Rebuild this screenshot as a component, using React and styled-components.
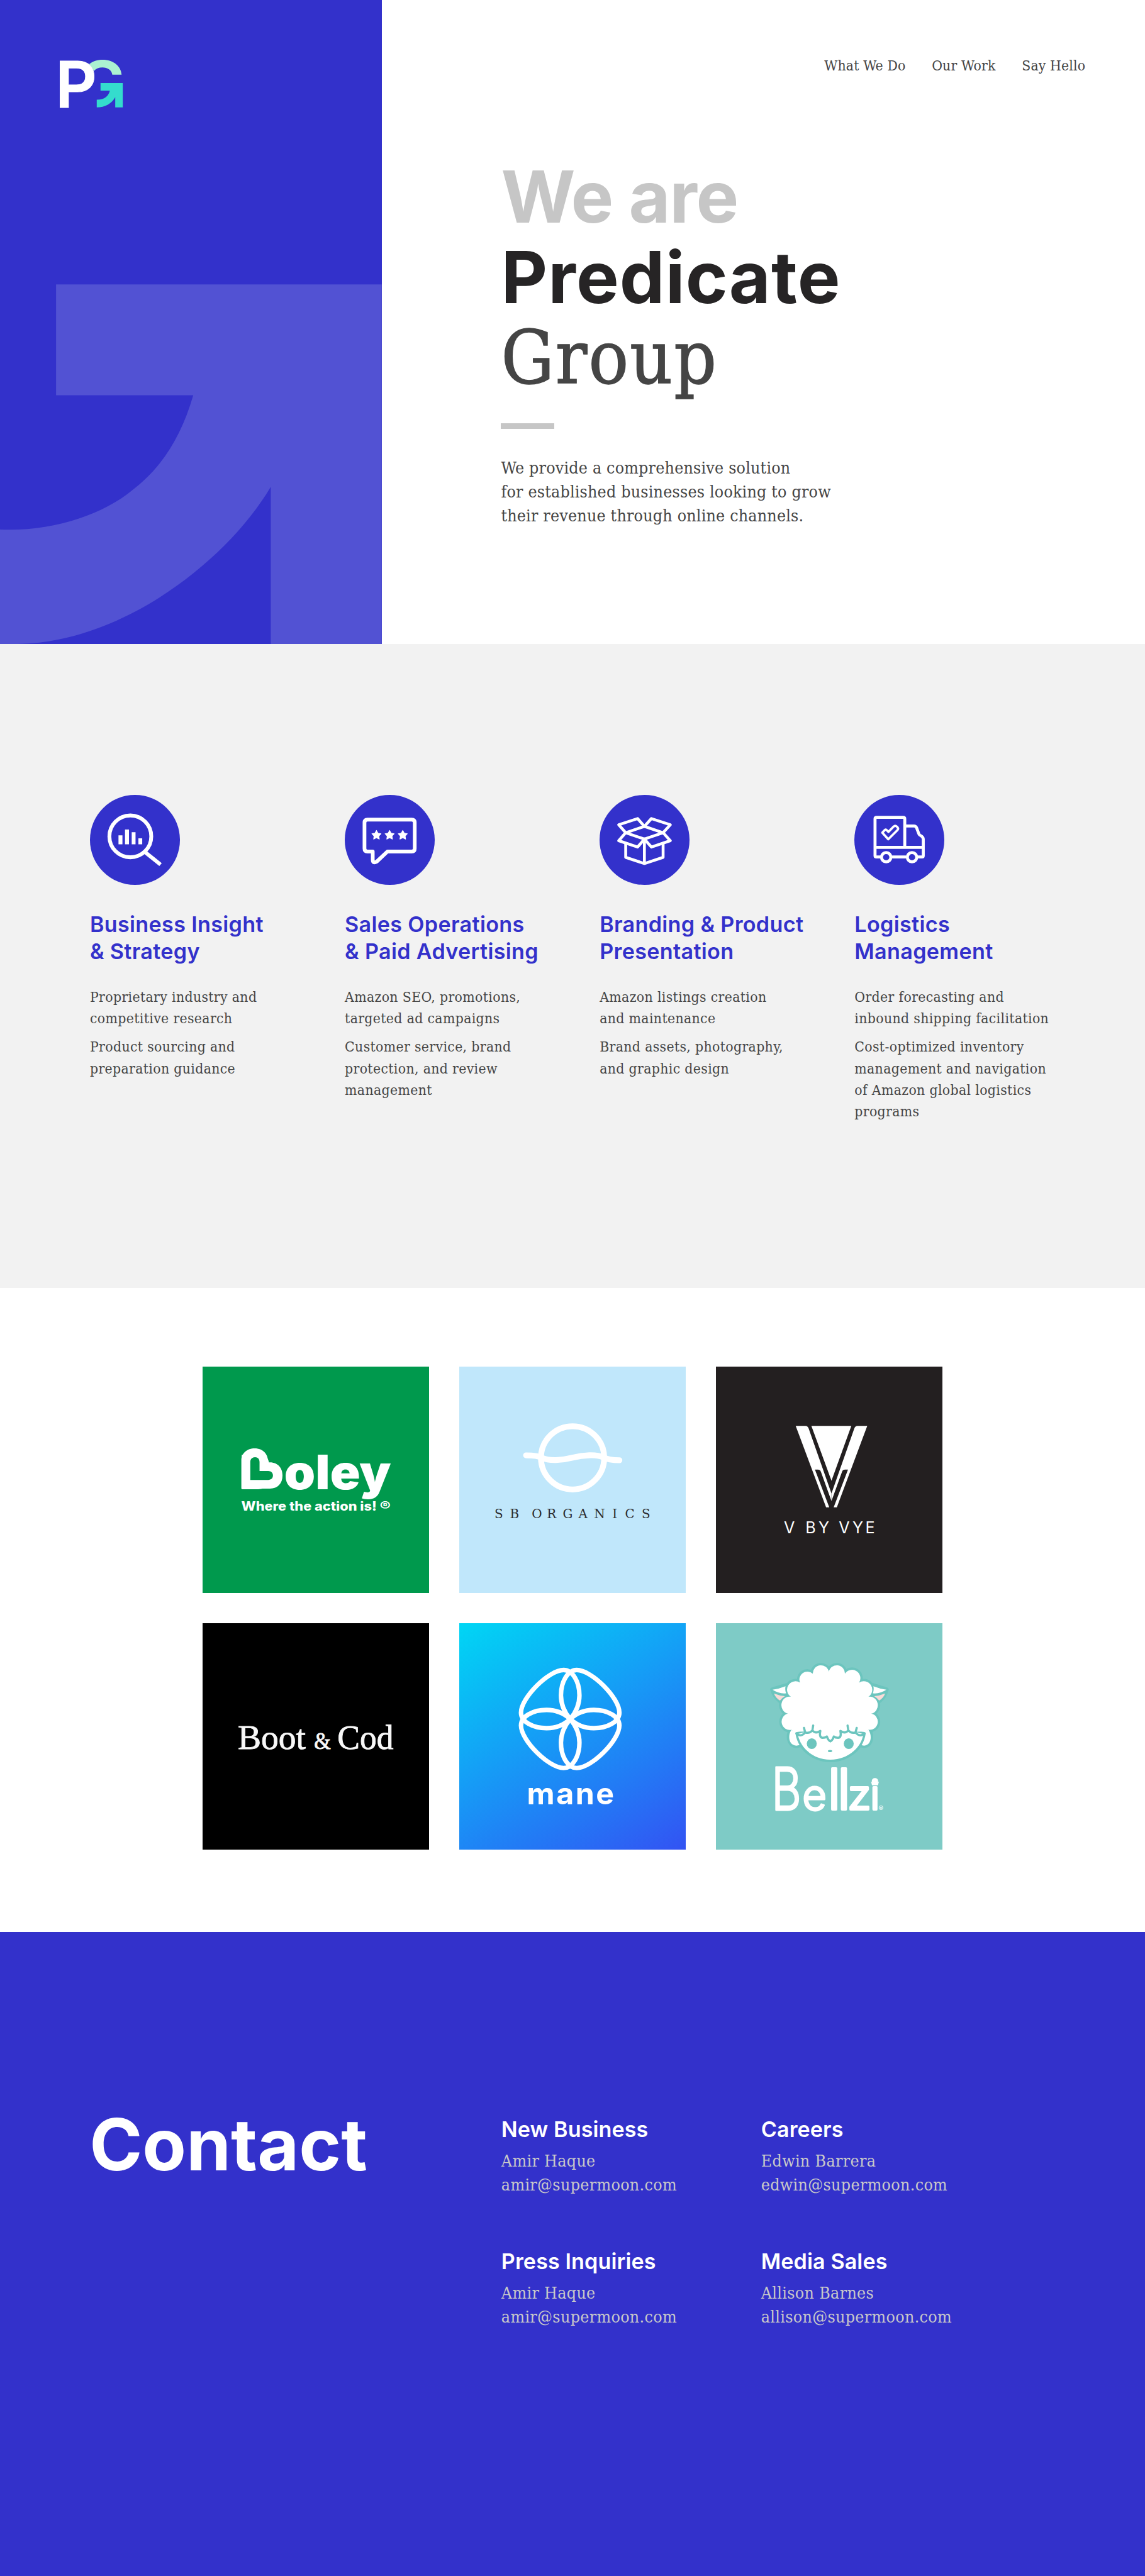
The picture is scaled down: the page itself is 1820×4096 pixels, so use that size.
import React from "react";
import styled, { createGlobalStyle } from "styled-components";

// 1rem is one hundred design pixels; u() turns design pixels into rem.
const u = (n) => `${n / 100}rem`;

const blue = "#3331cb";
const ink = "#454545";
const sans = `Inter, "Liberation Sans", sans-serif`;
const serif = `"DejaVu Serif Condensed", "DejaVu Serif", serif`;

const GlobalStyle = createGlobalStyle`
  html { font-size: 94.81px; background: ${blue}; overflow-x: hidden; }
  body { margin: 0; font-family: ${serif}; color: ${ink}; }
  h1, h2, h3, p, ul { margin: 0; padding: 0; }
`;

const Page = styled.div`
  width: 100%;
  overflow: hidden;
`;

const Section = styled.section`
  box-sizing: border-box;
  height: ${u(1080)};
  background: ${(p) => p.$bg};
`;

/* ---------- hero ---------- */

const Hero = styled(Section)`
  display: flex;
`;

const HeroPanel = styled.div`
  flex: none;
  display: grid;
  width: ${u(640)};
  height: 100%;
  background: ${blue};
  & > * { grid-area: 1 / 1; }
`;

const PanelArrow = styled.svg`
  width: 100%;
  height: 100%;
  display: block;
`;

const Logo = styled.svg`
  width: ${u(106.67)};
  height: ${u(80)};
  margin: ${u(100)} 0 0 ${u(100)};
  overflow: visible;
`;

const HeroMain = styled.div`
  flex: 1;
  display: flex;
  flex-direction: column;
  padding: ${u(94.5)} ${u(100)} 0 ${u(200)};
`;

const Nav = styled.nav`
  display: flex;
  justify-content: flex-end;
  gap: ${u(44)};
  font-size: ${u(24)};
  line-height: ${u(30)};
  letter-spacing: ${u(0.15)};
`;

const NavLink = styled.a`
  color: ${ink};
  white-space: nowrap;
`;

const Headline = styled.h1`
  margin-top: ${u(138.5)};
  font: 700 ${u(120)} / ${u(135)} ${sans};
`;

const HeadlineLine = styled.span`
  display: block;
  color: ${(p) => p.$color};
  letter-spacing: ${(p) => u(p.$track || 0)};
`;

const HeadlineSerif = styled(HeadlineLine)`
  font: 400 ${u(124)} / ${u(135)} ${serif};
  -webkit-text-stroke: ${u(1.4)} ${(p) => p.$color};
`;

const Rule = styled.div`
  width: ${u(89.5)};
  height: ${u(10)};
  margin-top: ${u(41.5)};
  background: #c6c6c6;
`;

const Intro = styled.p`
  margin-top: ${u(45.5)};
  font-size: ${u(28)};
  line-height: ${u(40)};
  letter-spacing: ${u(0.22)};
  white-space: pre-line;
`;

/* ---------- services ---------- */

const Services = styled(Section)`
  display: grid;
  grid-template-columns: repeat(4, ${u(427.3)});
  align-items: start;
  padding: ${u(253.3)} 0 0 ${u(150.8)};
`;

const Service = styled.article`
  display: flex;
  flex-direction: column;
`;

const ServiceIcon = styled.svg`
  width: ${u(150.4)};
  height: ${u(150.4)};
  border-radius: 50%;
  background: ${blue};
`;

const ServiceTitle = styled.h3`
  margin-top: ${u(45)};
  color: ${blue};
  font: 600 ${u(36)} / ${u(45)} ${sans};
  letter-spacing: ${u(0.35)};
  white-space: pre-line;
`;

const ServiceText = styled.div`
  display: flex;
  flex-direction: column;
  gap: ${u(12)};
  margin-top: ${u(35)};
  font-size: ${u(24)};
  line-height: ${u(36)};
  letter-spacing: ${u(0.38)};
  white-space: pre-line;
`;

/* ---------- brands ---------- */

const Brands = styled(Section)`
  display: grid;
  grid-template-columns: repeat(3, ${u(380)});
  grid-auto-rows: ${u(380)};
  gap: ${u(50)};
  justify-content: center;
  align-content: start;
  padding-top: ${u(132)};
`;

const Tile = styled.svg`
  display: block;
  width: 100%;
  height: 100%;
  background: ${(p) => p.$bg};
  fill: #fff;
`;

const SansText = styled.text`
  font-family: ${sans};
  font-weight: ${(p) => p.$weight || 400};
  font-size: ${(p) => p.$size}px;
`;

const SerifText = styled.text`
  font-family: ${(p) => p.$family};
  font-size: ${(p) => p.$size}px;
  fill: ${(p) => p.$color};
  stroke: ${(p) => p.$color};
  stroke-width: ${(p) => p.$stroke || 0};
`;

const Sized = styled.tspan`
  font-size: ${(p) => p.$size}px;
`;

/* ---------- contact ---------- */

const Contact = styled(Section)`
  display: grid;
  grid-template-columns: ${u(690.5)} 1fr;
  align-items: start;
  padding: ${u(289.5)} 0 0 ${u(150)};
`;

const ContactTitle = styled.h2`
  color: #fff;
  font: 700 ${u(120)} / ${u(135)} ${sans};
`;

const People = styled.div`
  display: grid;
  grid-template-columns: ${u(435.5)} ${u(435.5)};
  row-gap: ${u(86.2)};
  padding-top: ${u(18.8)};
`;

const Person = styled.div`
  color: #c9c9c9;
  font-size: ${u(28)};
  line-height: ${u(40)};
  letter-spacing: ${u(0.36)};
`;

const PersonTitle = styled.h3`
  margin-bottom: ${u(9.8)};
  padding-top: ${u(1)};
  color: #fff;
  font: 600 ${u(36)} / ${u(45)} ${sans};
  letter-spacing: ${u(0.1)};
`;

const Line = styled.div`
  white-space: nowrap;
`;

/* ---------- drawings ---------- */

const star = (cx, cy, r) =>
  Array.from({ length: 10 }, (_, i) => {
    const a = -Math.PI / 2 + (i * Math.PI) / 5;
    const k = i % 2 ? r * 0.52 : r;
    return `${(cx + k * Math.cos(a)).toFixed(2)},${(cy + k * Math.sin(a)).toFixed(2)}`;
  }).join(" ");

const InsightIcon = () => (
  <ServiceIcon viewBox="0 0 150 150" fill="#fff">
    <circle cx="67.5" cy="69.3" r="35" fill="none" stroke="#fff" strokeWidth="6.4" />
    <path d="M92 95.5L118 116.5" stroke="#fff" strokeWidth="6.4" />
    <path d="M47.7 67.7h6.6v14.8h-6.6zM58.6 57.8h6.6v24.7h-6.6zM69.8 62.4h6.4v20.1h-6.4zM81 72.7h6.4v9.8H81z" />
  </ServiceIcon>
);

const SalesIcon = () => (
  <ServiceIcon viewBox="0 0 150 150" fill="#fff">
    <path
      d="M71.5 94.6H112Q117 94.6 117 89.6V46.3Q117 41.3 112 41.3H38Q33 41.3 33 46.3V89.6Q33 94.6 38 94.6H46.8V108.5Q47 115.5 53.5 111.5Z"
      fill="none" stroke="#fff" strokeWidth="6.2" strokeLinejoin="round"
    />
    {[53, 75, 97].map((x) => (
      <polygon key={x} points={star(x, 67.4, 8)} stroke="#fff" strokeWidth="1.2" strokeLinejoin="round" />
    ))}
  </ServiceIcon>
);

const BoxIcon = () => (
  <ServiceIcon viewBox="16.5 10 451 451" fill="none" stroke="#fff" strokeWidth="14.5" strokeLinejoin="round" strokeLinecap="round">
    <path d="M242 168L148 200L242 232L336 200Z" />
    <path d="M148 200L113 160L208 129L242 168L277 129L372 160L336 200L372 240L277 272L242 232L208 272L113 240Z" />
    <path d="M148 258V324L242 355L336 324V258M242 232V355" />
  </ServiceIcon>
);

const TruckIcon = () => (
  <ServiceIcon viewBox="15.5 10 451 451" fill="none" stroke="#fff" strokeWidth="15" strokeLinejoin="round">
    <path d="M150 322H126Q119.500 322 119.500 315V130Q119.500 123 127 123H261Q269 123 269 130V274" />
    <path d="M119.500 274H362M204 322H277M269 166H315Q324 166 328 174L340 206Q342 211 348 214Q362 221 362 232V315Q362 322 356 322H330" />
    <circle cx="175.500" cy="323" r="23.500" />
    <circle cx="305.500" cy="323" r="23.500" />
    <path d="M156 200L167 188Q172 182 178 187L187 196L213 169Q221 162 229 169L232 172Q239 180 232 187L186 233Z" strokeWidth="11.500" />
  </ServiceIcon>
);

const BrandMark = () => (
  <Logo viewBox="60 60 320 240">
    <path fill="#abf2d1" d="M208 82C225 68 250 60 275 60C330 60 368 92 371 135H324C321 112 300 99 275 99C257 99 243 104 232 116Z" />
    <path fill="#34dccd" d="M265 177H377V300H339V248C322 280 288 299 246 300V261C285 262 305 243 312 216H265Z" />
    <SansText $size={324} $weight={600} x="38" y="299" fill="#fff" stroke="#fff" strokeWidth="3">P</SansText>
  </Logo>
);

const BoleyTile = () => (
  <Tile $bg="#00994d" viewBox="0 0 380 380">
    <SansText $size={80} $weight={900} y="205.5">
      <tspan x="62">B</tspan>
      <tspan x="137" textLength="179" lengthAdjust="spacingAndGlyphs">oley</tspan>
    </SansText>
    <path d="M65 204.600V157C65 145 75 137 87.500 137C101 137 110 146 110 160.700H113C126 160.700 134 170 134 182.500C134 196 126 204.600 113 204.600Z" />
    <path fill="#00994d" d="M80 190V160C80 155 83.500 152 88 152C92.500 152 95.500 155 95.500 160V175H110C115 175 118 178 118 182.500S115 190 110 190Z" />
    <SansText $size={21.5} $weight={800} y="242">
      <tspan x="65" textLength="227" lengthAdjust="spacingAndGlyphs">Where the action is!</tspan>
      <tspan x="297" textLength="18.500" lengthAdjust="spacingAndGlyphs">®</tspan>
    </SansText>
  </Tile>
);

const OrganicsTile = () => (
  <Tile $bg="#c0e7fb" viewBox="0 0 380 380">
    <g fill="none" stroke="#fff" strokeWidth="9.800" strokeLinecap="round">
      <circle cx="190" cy="153" r="53" />
      <path d="M112 148.800C125 148.800 133 149.500 139 153C150 158.500 172 157.500 190 152.800C208 148 230 147 241 152C250 156.500 258 157 268.500 157" />
    </g>
    <SerifText $size={21} $family={`"DejaVu Serif", serif`} $color="#2b2b2e" y="254" x="59 85 110 121.500 147 173.500 200 226 256.500 278 306">
      SB ORGANICS
    </SerifText>
  </Tile>
);

const VyeTile = () => (
  <Tile $bg="#231f20" viewBox="0 0 380 380">
    <path d="M160 99.300H227L193.700 191.400Z" />
    {[false, true].map((flip) => (
      <path
        key={String(flip)}
        transform={flip ? "matrix(-1 0 0 1 387.4 0)" : undefined}
        d="M133.700 99.300H150C153 99.300 154.500 101 155.500 104L193.700 212.800V225.500L176 176.500C175 173.500 173.500 172.800 171 172.800H166L190 235.900H184.700Z"
      />
    ))}
    <SansText $size={26.5} $weight={400} y="280" x="114 140 150 172 195 206 229 250.500">V BY VYE</SansText>
  </Tile>
);

const BootTile = () => (
  <Tile $bg="#000" viewBox="0 0 380 380">
    <SerifText $size={58} $family={`"Liberation Serif", serif`} $color="#f8f8f8" $stroke={0.9} y="211">
      <tspan x="59" textLength="114" lengthAdjust="spacingAndGlyphs">Boot</tspan>
      <Sized $size={40} x="187" textLength="28" lengthAdjust="spacingAndGlyphs">&amp;</Sized>
      <tspan x="226" textLength="94" lengthAdjust="spacingAndGlyphs">Cod</tspan>
    </SerifText>
  </Tile>
);

const petal =
  "M186 160.700C196 149 201.500 136 201.500 121C201.500 98 190 78.500 175 78.500C150 78.500 103.500 125 103.500 150C103.500 165 123 176 146.500 176C162 176 175 171 186 160.700Z";

const ManeTile = () => (
  <Tile $bg="linear-gradient(148deg, #00d6f4 0%, #14a0f6 42%, #2379f5 72%, #3353f3 100%)" viewBox="0 0 380 380">
    <g fill="none" stroke="#fff" strokeWidth="7.500">
      <path d={petal} />
      <path d={petal} transform="matrix(-1 0 0 1 372 0)" />
      <path d={petal} transform="matrix(1 0 0 -1 0 321.4)" />
      <path d={petal} transform="matrix(-1 0 0 -1 372 321.4)" />
    </g>
    <SansText $size={51} $weight={700} x="113.500" y="304" textLength="146">mane</SansText>
  </Tile>
);

const wool =
  "M140 362A40 41 0 0 1 122 281A40 43 0 0 1 137 196A42 42 0 0 1 183 125A40 40 0 0 1 247 80A41 41 0 0 1 328 70A41 41 0 0 1 409 80A40 40 0 0 1 480 125A42 42 0 0 1 527 196A40 43 0 0 1 541 281A40 41 0 0 1 527 362L505 382L335 425L165 382Z";
const curls = "M140 362C122 385 122 440 165 442L185 438L165 378ZM527 362C545 385 545 440 505 442L485 438L505 378Z";
const face = "M165 380C180 470 260 518 335 518S495 470 508 380L335 330Z";
const fringe =
  "M165 380Q185 402 209 376L203 353M209 376Q230 382 245 366L249 341M245 366Q262 384 285 368Q278 402 297 403Q310 403 318 396Q325 416 335 420";

const BellziTile = () => (
  <Tile $bg="#7ecbc6" viewBox="0 0 380 380">
    <g transform="translate(80 58) scale(0.33333)" strokeLinejoin="round" strokeLinecap="round">
      <g fill="#6cc5be" stroke="#6cc5be" strokeWidth="24">
        <path d={wool} />
        <path d={curls} />
        <path d={face} strokeWidth="14" />
        <path d="M45 160L115 140L110 192L82 215Q55 195 45 160ZM617 160L550 140L555 192L582 215Q608 195 617 160Z" />
      </g>
      <path d="M45 161Q80 155 110 143Q106 162 113 179Q75 182 45 161ZM617 161Q582 155 552 143Q556 162 549 179Q587 182 617 161Z" />
      <path fill="#fadbd8" d="M52 180Q80 192 107 193Q92 202 82 215Q60 203 52 180ZM611 180Q583 192 556 193Q571 202 581 215Q603 203 611 180Z" />
      <path d={curls} />
      <path d={wool} />
      <path d={face} stroke="#6cc5be" strokeWidth="11" />
      <path d="M190 300H480L500 372L440 372L380 385L335 410L290 385L230 370L172 372Z" />
      <g fill="none" stroke="#6cc5be" strokeWidth="11">
        <path d={fringe} />
        <path d={fringe} transform="matrix(-1 0 0 1 671 0)" />
      </g>
      <g fill="#6cc5be">
        <ellipse cx="242" cy="432" rx="25" ry="27" />
        <ellipse cx="428" cy="432" rx="25" ry="27" />
        <ellipse cx="334" cy="469" rx="11" ry="5.500" />
      </g>
      <SansText $size={298} $weight={300} transform="translate(40 765) scale(0.77 1)" stroke="#fff" strokeWidth="9">B</SansText>
      <SansText $size={212} $weight={300} x="194" y="765" stroke="#fff" strokeWidth="9">e</SansText>
      <SansText $size={284} $weight={300} y="763" stroke="#fff" strokeWidth="12">
        <Sized $size={284} x="322 371">ll</Sized>
        <Sized $size={204} x="423" textLength="117" lengthAdjust="spacingAndGlyphs">z</Sized>
        <Sized $size={204} x="536">i</Sized>
      </SansText>
      <path d="M545 642L540 622L549 629L553 617L560 628L567 617L571 629L580 622L575 642Z" />
      <SansText $size={36} $weight={500} x="578" y="772">®</SansText>
    </g>
  </Tile>
);

/* ---------- content ---------- */

const services = [
  {
    Icon: InsightIcon,
    title: "Business Insight\n& Strategy",
    text: ["Proprietary industry and\ncompetitive research", "Product sourcing and\npreparation guidance"],
  },
  {
    Icon: SalesIcon,
    title: "Sales Operations\n& Paid Advertising",
    text: ["Amazon SEO, promotions,\ntargeted ad campaigns", "Customer service, brand\nprotection, and review\nmanagement"],
  },
  {
    Icon: BoxIcon,
    title: "Branding & Product\nPresentation",
    text: ["Amazon listings creation\nand maintenance", "Brand assets, photography,\nand graphic design"],
  },
  {
    Icon: TruckIcon,
    title: "Logistics\nManagement",
    text: [
      "Order forecasting and\ninbound shipping facilitation",
      "Cost-optimized inventory\nmanagement and navigation\nof Amazon global logistics\nprograms",
    ],
  },
];

const people = [
  ["New Business", "Amir Haque", "amir@supermoon.com"],
  ["Careers", "Edwin Barrera", "edwin@supermoon.com"],
  ["Press Inquiries", "Amir Haque", "amir@supermoon.com"],
  ["Media Sales", "Allison Barnes", "allison@supermoon.com"],
];

export default function App() {
  return (
    <Page>
      <GlobalStyle />
      <Hero $bg="#fff">
        <HeroPanel>
          <PanelArrow viewBox="0 0 640 1080" preserveAspectRatio="none">
            <path
              fill="#5252d3"
              d="M94 477H640V1080H454V816.500C378 945 200 1078 30 1080H0V888C85 892 172 864 223 821C270 785 303 735 324 663H94Z"
            />
          </PanelArrow>
          <BrandMark />
        </HeroPanel>
        <HeroMain>
          <Nav>
            <NavLink>What We Do</NavLink>
            <NavLink>Our Work</NavLink>
            <NavLink>Say Hello</NavLink>
          </Nav>
          <Headline>
            <HeadlineLine $color="#c6c6c6" $track={-1.4}>We are</HeadlineLine>
            <HeadlineLine $color="#262425" $track={1.2}>Predicate</HeadlineLine>
            <HeadlineSerif $color="#454545" $track={2.1}>Group</HeadlineSerif>
          </Headline>
          <Rule />
          <Intro>{"We provide a comprehensive solution\nfor established businesses looking to grow\ntheir revenue through online channels."}</Intro>
        </HeroMain>
      </Hero>

      <Services $bg="#f2f2f2">
        {services.map(({ Icon, title, text }) => (
          <Service key={title}>
            <Icon />
            <ServiceTitle>{title}</ServiceTitle>
            <ServiceText>
              {text.map((t) => (
                <p key={t}>{t}</p>
              ))}
            </ServiceText>
          </Service>
        ))}
      </Services>

      <Brands $bg="#fff">
        <BoleyTile />
        <OrganicsTile />
        <VyeTile />
        <BootTile />
        <ManeTile />
        <BellziTile />
      </Brands>

      <Contact $bg={blue}>
        <ContactTitle>Contact</ContactTitle>
        <People>
          {people.map(([title, name, mail]) => (
            <Person key={title}>
              <PersonTitle>{title}</PersonTitle>
              <Line>{name}</Line>
              <Line>{mail}</Line>
            </Person>
          ))}
        </People>
      </Contact>
    </Page>
  );
}
